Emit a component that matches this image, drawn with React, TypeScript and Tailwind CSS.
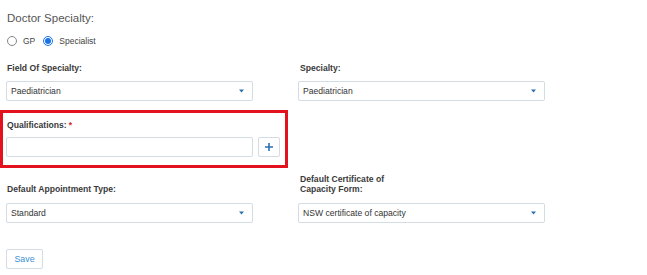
import React from "react";

//types
type SelectProps = { value: string };
type LabelProps = { children: React.ReactNode; required?: boolean };

const font = "font-['Liberation_Sans',Arial,sans-serif]";

function Label({ children, required }: LabelProps) {
  return (
    <div className="text-[8.6px] font-bold leading-[10px] text-[#3a3a3a]">
      {children}
      {required && <span className="ml-[2px] text-[#e0202a]">*</span>}
    </div>
  );
}

function Select({ value }: SelectProps) {
  return (
    <div className="flex h-[20px] w-[247px] items-center justify-between rounded-[2px] border border-[#d3dbe3] bg-white pl-[4px] pr-[8px]">
      <span className="text-[8.6px] leading-[10px] text-[#333]">{value}</span>
      <svg width="5" height="4" viewBox="0 0 5 4">
        <path d="M0 0.5h5L2.5 3.5z" fill="#2a6fae" />
      </svg>
    </div>
  );
}

function Radio({ checked, label }: { checked?: boolean; label: string }) {
  return (
    <label className="flex h-[12px] items-center gap-[6px]">
      <span
        className={
          checked
            ? "flex h-[10px] w-[10px] items-center justify-center rounded-full border border-[#1a73e8] bg-white"
            : "h-[10px] w-[10px] rounded-full border border-[#858585] bg-white"
        }
      >
        {checked && <span className="h-[6px] w-[6px] rounded-full bg-[#1a73e8]" />}
      </span>
      <span className="text-[8.5px] leading-[12px] text-[#444]">{label}</span>
    </label>
  );
}

export default function App() {
  return (
    <div className={`${font} h-[275px] w-[647px] bg-white pl-[6px] pt-[11px]`}>
      <div className="h-[14px] pl-[1px] text-[11.5px] leading-[14px] text-[#555]">
        Doctor Specialty:
      </div>
      <div className="mt-[10px] flex h-[12px] items-center gap-[8px] pl-[1px]">
        <Radio label="GP" />
        <Radio checked label="Specialist" />
      </div>

      <div className="mt-[16px] flex gap-[45px]">
        <div className="flex flex-col gap-[8px] pl-[1px]">
          <Label>Field Of Specialty:</Label>
          <div className="-ml-[1px]">
            <Select value="Paediatrician" />
          </div>
        </div>
        <div className="flex flex-col gap-[8px] pl-[2px]">
          <Label>Specialty:</Label>
          <div className="-ml-[2px]">
            <Select value="Paediatrician" />
          </div>
        </div>
      </div>

      {/* highlighted field */}
      <div className="relative mt-[19px] w-[275px]">
        <div className="pointer-events-none absolute -left-[6px] -top-[10px] h-[58px] w-[288px] border-[3px] border-[#e3121f]" />
        <div className="pl-[1px]">
          <Label required>Qualifications:</Label>
        </div>
        <div className="mt-[7px] flex gap-[5px]">
          <div className="h-[20px] w-[247px] rounded-[2px] border border-[#d3dbe3] bg-white" />
          <button className="flex h-[20px] w-[22px] items-center justify-center rounded-[2px] border border-[#d3dbe3] bg-white">
            <svg width="8" height="8" viewBox="0 0 8 8">
              <path d="M4 0v8M0 4h8" stroke="#2a72b5" strokeWidth="1.6" />
            </svg>
          </button>
        </div>
      </div>

      <div className="mt-[17px] flex gap-[45px]">
        <div className="flex flex-col pl-[1px]">
          <div className="flex h-[20px] items-end">
            <Label>Default Appointment Type:</Label>
          </div>
          <div className="-ml-[1px] mt-[9px]">
            <Select value="Standard" />
          </div>
        </div>
        <div className="flex flex-col pl-[2px]">
          <div className="flex h-[20px] items-end">
            <Label>
              Default Certificate of
              <br />
              Capacity Form:
            </Label>
          </div>
          <div className="-ml-[2px] mt-[9px]">
            <Select value="NSW certificate of capacity" />
          </div>
        </div>
      </div>

      <button className="mt-[26px] flex h-[20px] w-[37px] items-center justify-center rounded-[2px] border border-[#d3dbe3] bg-white text-[8.8px] leading-[10px] text-[#3a8fd6]">
        Save
      </button>
    </div>
  );
}
